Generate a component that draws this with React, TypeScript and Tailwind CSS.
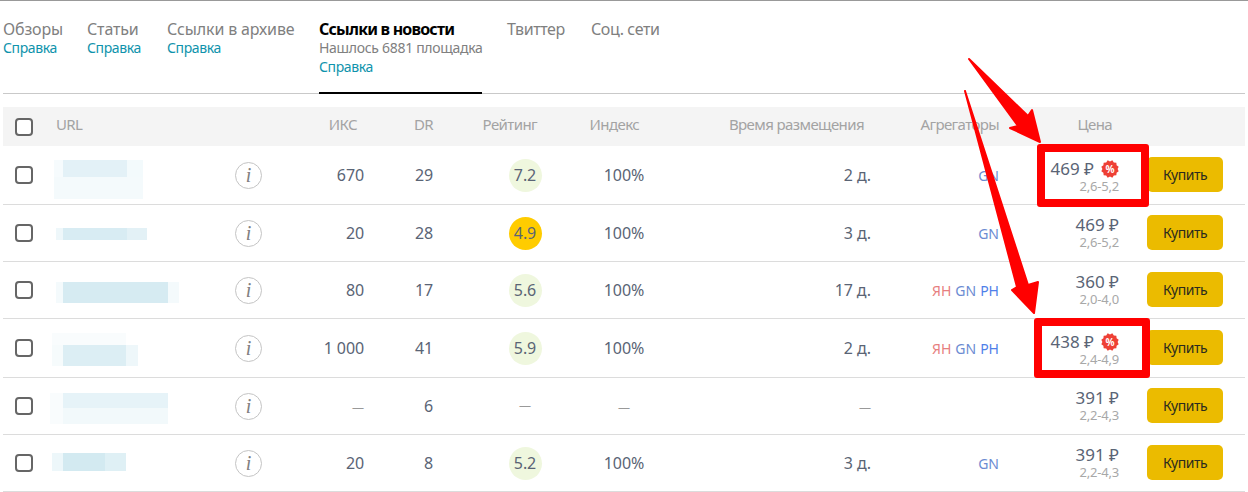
import React from 'react';

type Blur = { x: number; y: number; w: number; h: number; c: string };

type Row = {
  h: string;
  blur: Blur[];
  iks: string;
  dr: string;
  rating: string;
  index: string;
  time: string;
  agg: string[];
  price: string;
  range: string;
  sale?: boolean;
};

const rows: Row[] = [
  {
    h: 'h-[59px]',
    blur: [
      { x: 2, y: 14, w: 9, h: 17, c: '#f6fbfd' },
      { x: 11, y: 14, w: 64, h: 17, c: '#e3f1f7' },
      { x: 75, y: 14, w: 16, h: 17, c: '#f3fafc' },
      { x: 2, y: 31, w: 89, h: 22, c: '#f4fafc' },
    ],
    iks: '670',
    dr: '29',
    rating: '7.2',
    index: '100%',
    time: '2 д.',
    agg: ['GN'],
    price: '469 ₽',
    range: '2,6-5,2',
    sale: true,
  },
  {
    h: 'h-[57px]',
    blur: [
      { x: 4, y: 23, w: 11, h: 12, c: '#eef7fa' },
      { x: 11, y: 23, w: 64, h: 12, c: '#d8ecf3' },
      { x: 75, y: 23, w: 20, h: 12, c: '#e3f1f6' },
    ],
    iks: '20',
    dr: '28',
    rating: '4.9',
    index: '100%',
    time: '3 д.',
    agg: ['GN'],
    price: '469 ₽',
    range: '2,6-5,2',
  },
  {
    h: 'h-[57px]',
    blur: [
      { x: 4, y: 20, w: 7, h: 21, c: '#f4fafc' },
      { x: 11, y: 20, w: 105, h: 21, c: '#d6ebf2' },
      { x: 116, y: 20, w: 11, h: 21, c: '#f4fafc' },
    ],
    iks: '80',
    dr: '17',
    rating: '5.6',
    index: '100%',
    time: '17 д.',
    agg: ['ЯН', 'GN', 'PH'],
    price: '360 ₽',
    range: '2,0-4,0',
  },
  {
    h: 'h-[59px]',
    blur: [
      { x: 0, y: 14, w: 74, h: 12, c: '#f9fcfd' },
      { x: 0, y: 26, w: 11, h: 21, c: '#f6fbfc' },
      { x: 11, y: 26, w: 63, h: 21, c: '#dceef4' },
      { x: 74, y: 26, w: 12, h: 21, c: '#eef7fa' },
    ],
    iks: '1 000',
    dr: '41',
    rating: '5.9',
    index: '100%',
    time: '2 д.',
    agg: ['ЯН', 'GN', 'PH'],
    price: '438 ₽',
    range: '2,4-4,9',
    sale: true,
  },
  {
    h: 'h-[57px]',
    blur: [
      { x: -2, y: 15, w: 13, h: 31, c: '#f9fcfd' },
      { x: 11, y: 15, w: 105, h: 15, c: '#e6f3f8' },
      { x: 11, y: 30, w: 105, h: 16, c: '#f2f9fb' },
    ],
    iks: '—',
    dr: '6',
    rating: '—',
    index: '—',
    time: '—',
    agg: [],
    price: '391 ₽',
    range: '2,2-4,3',
  },
  {
    h: 'h-[57px]',
    blur: [
      { x: 0, y: 18, w: 11, h: 18, c: '#edf7fa' },
      { x: 11, y: 18, w: 42, h: 18, c: '#d3eaf1' },
      { x: 53, y: 18, w: 21, h: 18, c: '#dff0f5' },
    ],
    iks: '20',
    dr: '8',
    rating: '5.2',
    index: '100%',
    time: '3 д.',
    agg: ['GN'],
    price: '391 ₽',
    range: '2,2-4,3',
  },
];

const aggColor: Record<string, string> = {
  'ЯН': 'text-[#e77f7f]',
  GN: 'text-[#6b8bd2]',
  PH: 'text-[#4f7fe9]',
};

const tabs = [
  { name: 'Обзоры', w: 'w-[59px]' },
  { name: 'Статьи', w: 'w-[55px]' },
  { name: 'Ссылки в архиве', w: 'w-[127px]' },
];

function Check() {
  return <div className="size-[18px] rounded-[4px] border-2 border-[#666] bg-white" />;
}

function Cell({ value }: { value: string }) {
  if (value === '—') return <span className="text-[12px] text-[#999]">—</span>;
  return <>{value}</>;
}

function SaleBadge() {
  const pts: string[] = [];
  for (let i = 0; i < 24; i++) {
    const r = i % 2 ? 9 : 7.6;
    const a = (i * Math.PI) / 12;
    pts.push(`${(9 + r * Math.cos(a)).toFixed(2)},${(9 + r * Math.sin(a)).toFixed(2)}`);
  }
  return (
    <svg width="18" height="18" viewBox="0 0 18 18" className="shrink-0">
      <polygon points={pts.join(' ')} fill="#ee4035" />
      <text x="9" y="12.6" textAnchor="middle" fontSize="10" fontWeight="700" fill="#fff">
        %
      </text>
    </svg>
  );
}

function TableRow({ row }: { row: Row }) {
  const bad = row.rating === '4.9';
  return (
    <div className={`flex items-center border-b border-[#dcdcdc] text-[16px] tracking-[-0.1px] text-[#5a6475] ${row.h}`}>
      <div className="w-[49px] pl-[12px]">
        <Check />
      </div>
      <div className="w-[183px] h-full">
        <svg width="183" height="57" className="overflow-visible">
          {row.blur.map((b, i) => (
            <rect key={i} x={b.x} y={b.y} width={b.w} height={b.h} fill={b.c} />
          ))}
        </svg>
      </div>
      <div className="w-[65px]">
        <div className="size-[27px] rounded-full border border-[#c4c4c4] flex items-center justify-center font-['Liberation_Serif',serif] italic text-[20px] text-[#808080]">
          i
        </div>
      </div>
      <div className="w-[64px] text-right">
        <Cell value={row.iks} />
      </div>
      <div className="w-[69px] text-right">{row.dr}</div>
      <div className="w-[40px]" />
      <div className="w-[104px] flex justify-center">
        {row.rating === '—' ? (
          <Cell value="—" />
        ) : (
          <div
            className={`size-[33px] rounded-full flex items-center justify-center ${
              bad ? 'bg-[#ffcc00]' : 'bg-[#eff7de]'
            }`}
          >
            {row.rating}
          </div>
        )}
      </div>
      <div className="w-[94px] text-center">
        <Cell value={row.index} />
      </div>
      <div className="w-[200px] text-right">
        <Cell value={row.time} />
      </div>
      <div className="w-[128px] flex justify-end gap-[4px] text-[14px] tracking-normal">
        {row.agg.map((a) => (
          <span key={a} className={aggColor[a]}>
            {a}
          </span>
        ))}
      </div>
      <div className={`w-[120px] flex flex-col items-end ${row.sale ? 'mt-[3px]' : 'mb-[2px]'}`}>
        <div className="flex items-center gap-[7px] h-[20px] text-[17px] leading-[20px] tracking-normal">
          <span>{row.price}</span>
          {row.sale && <SaleBadge />}
        </div>
        <div className="text-[13px] leading-[15px] tracking-[-0.2px] text-[#a8a8a8]">{row.range}</div>
      </div>
      <button className="ml-[28px] mb-[2px] w-[76px] h-[35px] rounded-[5px] bg-[#ebbb00] text-[14px] tracking-[-0.5px] text-[#2b2b1e]">
        Купить
      </button>
    </div>
  );
}

export default function App() {
  return (
    <div className="relative h-[492px] w-[1248px] overflow-hidden bg-white border-t border-[#999] font-['Noto_Sans',sans-serif]">
      <div className="mx-[3px] flex gap-[25px] h-[93px] border-b border-[#c9c9c9] pt-[19px]">
        {tabs.map((t) => (
          <div key={t.name} className={`${t.w} whitespace-nowrap`}>
            <div className="text-[16px] leading-[18px] tracking-[-0.15px] text-[#808080]">{t.name}</div>
            <div className="text-[14px] leading-[19px] tracking-[-0.4px] text-[#0f93ac]">Справка</div>
          </div>
        ))}
        <div className="w-[163px] h-[74px] -mb-px whitespace-nowrap border-b-2 border-black">
          <div className="text-[16px] leading-[18px] font-bold tracking-[-0.8px] text-black">Ссылки в новости</div>
          <div className="text-[14px] leading-[19px] tracking-[-0.3px] text-[#808080]">Нашлось 6881 площадка</div>
          <div className="text-[14px] leading-[19px] tracking-[-0.4px] text-[#0f93ac]">Справка</div>
        </div>
        <div className="w-[59px] whitespace-nowrap text-[16px] leading-[18px] tracking-[-0.4px] text-[#808080]">Твиттер</div>
        <div className="whitespace-nowrap text-[16px] leading-[18px] tracking-[-0.4px] text-[#808080]">Соц. сети</div>
      </div>

      <div className="mx-[3px] mt-[13px]">
        <div className="flex items-center h-[39px] bg-[#f4f4f4] text-[15px] tracking-[-0.6px] text-[#a3a3a3]">
          <div className="w-[49px] pl-[12px]">
            <Check />
          </div>
          <div className="w-[248px] pl-[4px] pb-[4px]">URL</div>
          <div className="w-[57px] text-right pb-[4px]">ИКС</div>
          <div className="w-[76px] text-right pb-[4px]">DR</div>
          <div className="w-[104px] text-right pb-[4px]">Рейтинг</div>
          <div className="w-[102px] text-right pb-[4px]">Индекс</div>
          <div className="w-[225px] text-right pb-[4px]">Время размещения</div>
          <div className="w-[135px] text-right pb-[4px]">Агрегаторы</div>
          <div className="w-[113px] text-right pb-[4px]">Цена</div>
        </div>
        {rows.map((r, i) => (
          <TableRow key={i} row={r} />
        ))}
      </div>

      {/* red marks drawn on top of the screenshot */}
      <div className="absolute left-[1037px] top-[143px] w-[112px] h-[63px] border-[8px] border-[#f00] rounded-[3px]" />
      <div className="absolute left-[1034px] top-[317px] w-[116px] h-[60px] border-[8px] border-[#f00] rounded-[3px]" />
      <svg className="absolute left-0 -top-px pointer-events-none" width="1248" height="492">
        <polygon
          points="969,59 1028,116 1032,110 1040,142 1010,128 1018,126"
          fill="#f00"
          stroke="#f00"
          strokeWidth="2"
          strokeLinejoin="round"
        />
        <polygon
          points="965,91 1028,285 1038,282 1034,313 1012,290 1017,287"
          fill="#f00"
          stroke="#f00"
          strokeWidth="2"
          strokeLinejoin="round"
        />
      </svg>
    </div>
  );
}
